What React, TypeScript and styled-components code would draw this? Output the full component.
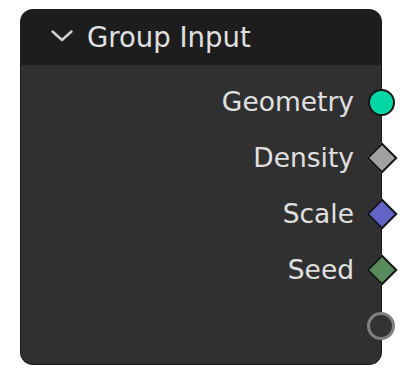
import styled, { createGlobalStyle } from 'styled-components';

const GlobalStyle = createGlobalStyle`
  html, body {
    margin: 0;
    padding: 0;
    background: #ffffff;
  }
  body {
    font-family: 'DejaVu Sans', 'Noto Sans', sans-serif;
  }
`;

type SocketKind = 'circle' | 'diamond' | 'empty';

interface Output {
  label?: string;
  kind: SocketKind;
  color: string;
}

const OUTPUTS: Output[] = [
  { label: 'Geometry', kind: 'circle', color: '#00d6a3' },
  { label: 'Density', kind: 'diamond', color: '#a1a1a1' },
  { label: 'Scale', kind: 'diamond', color: '#6363c7' },
  { label: 'Seed', kind: 'diamond', color: '#598c5c' },
  { kind: 'empty', color: '#333333' },
];

function Chevron() {
  return (
    <svg width='24' height='14' viewBox='0 0 24 14'>
      <path
        d='M2.5 2.5 L12 11 L21.5 2.5'
        fill='none'
        stroke='#d4d4d4'
        strokeWidth='2.4'
        strokeLinecap='round'
        strokeLinejoin='round'
      />
    </svg>
  );
}

function App() {
  return (
    <>
      <GlobalStyle />
      <Canvas>
        <Node>
          <Header>
            <Chevron />
            <Title>Group Input</Title>
          </Header>
          <Body>
            {OUTPUTS.map((o, i) => (
              <Row key={i}>
                {o.label && <Label>{o.label}</Label>}
                {o.kind === 'diamond' ? (
                  <Diamond $color={o.color} />
                ) : (
                  <Circle $color={o.color} $empty={o.kind === 'empty'} />
                )}
              </Row>
            ))}
          </Body>
        </Node>
      </Canvas>
    </>
  );
}

export default App;

const Canvas = styled.div`
  width: 420px;
  height: 376px;
  padding: 10px 0 0 21px;
  box-sizing: border-box;
`;

const Node = styled.div`
  width: 360px;
  height: 354px;
  border-radius: 12px;
  background-color: #303030;
  box-shadow: 0 0 0 1px #1a1a1a;
  display: flex;
  flex-direction: column;
`;

const Header = styled.div`
  height: 55px;
  background-color: #1d1d1d;
  border-radius: 12px 12px 0 0;
  display: flex;
  align-items: center;
  gap: 13px;
  padding: 0 0 0 29px;
  box-sizing: border-box;
  svg {
    margin-top: -3px;
  }
`;

const Title = styled.span`
  font-size: 27.5px;
  color: #e0e0e0;
  margin-top: -1px;
`;

const Body = styled.div`
  padding: 9px 0 10px;
  display: flex;
  flex-direction: column;
`;

const Row = styled.div`
  height: 56px;
  display: flex;
  justify-content: flex-end;
  align-items: center;
  gap: 14px;
  margin-right: -14px;
`;

const Label = styled.span`
  font-size: 26.5px;
  color: #e0e0e0;
  margin-top: -2px;
`;

const Circle = styled.span<{ $color: string; $empty?: boolean }>`
  width: ${({ $empty }) => ($empty ? '28px' : '27px')};
  height: ${({ $empty }) => ($empty ? '28px' : '27px')};
  box-sizing: border-box;
  border-radius: 50%;
  background-color: ${({ $color }) => $color};
  border: ${({ $empty }) => ($empty ? '3px solid #808080' : '2px solid #151515')};
`;

const Diamond = styled.span<{ $color: string }>`
  width: 22px;
  height: 22px;
  margin: 0 2.5px;
  box-sizing: border-box;
  background-color: ${({ $color }) => $color};
  border: 2px solid #151515;
  transform: rotate(45deg);
`;
